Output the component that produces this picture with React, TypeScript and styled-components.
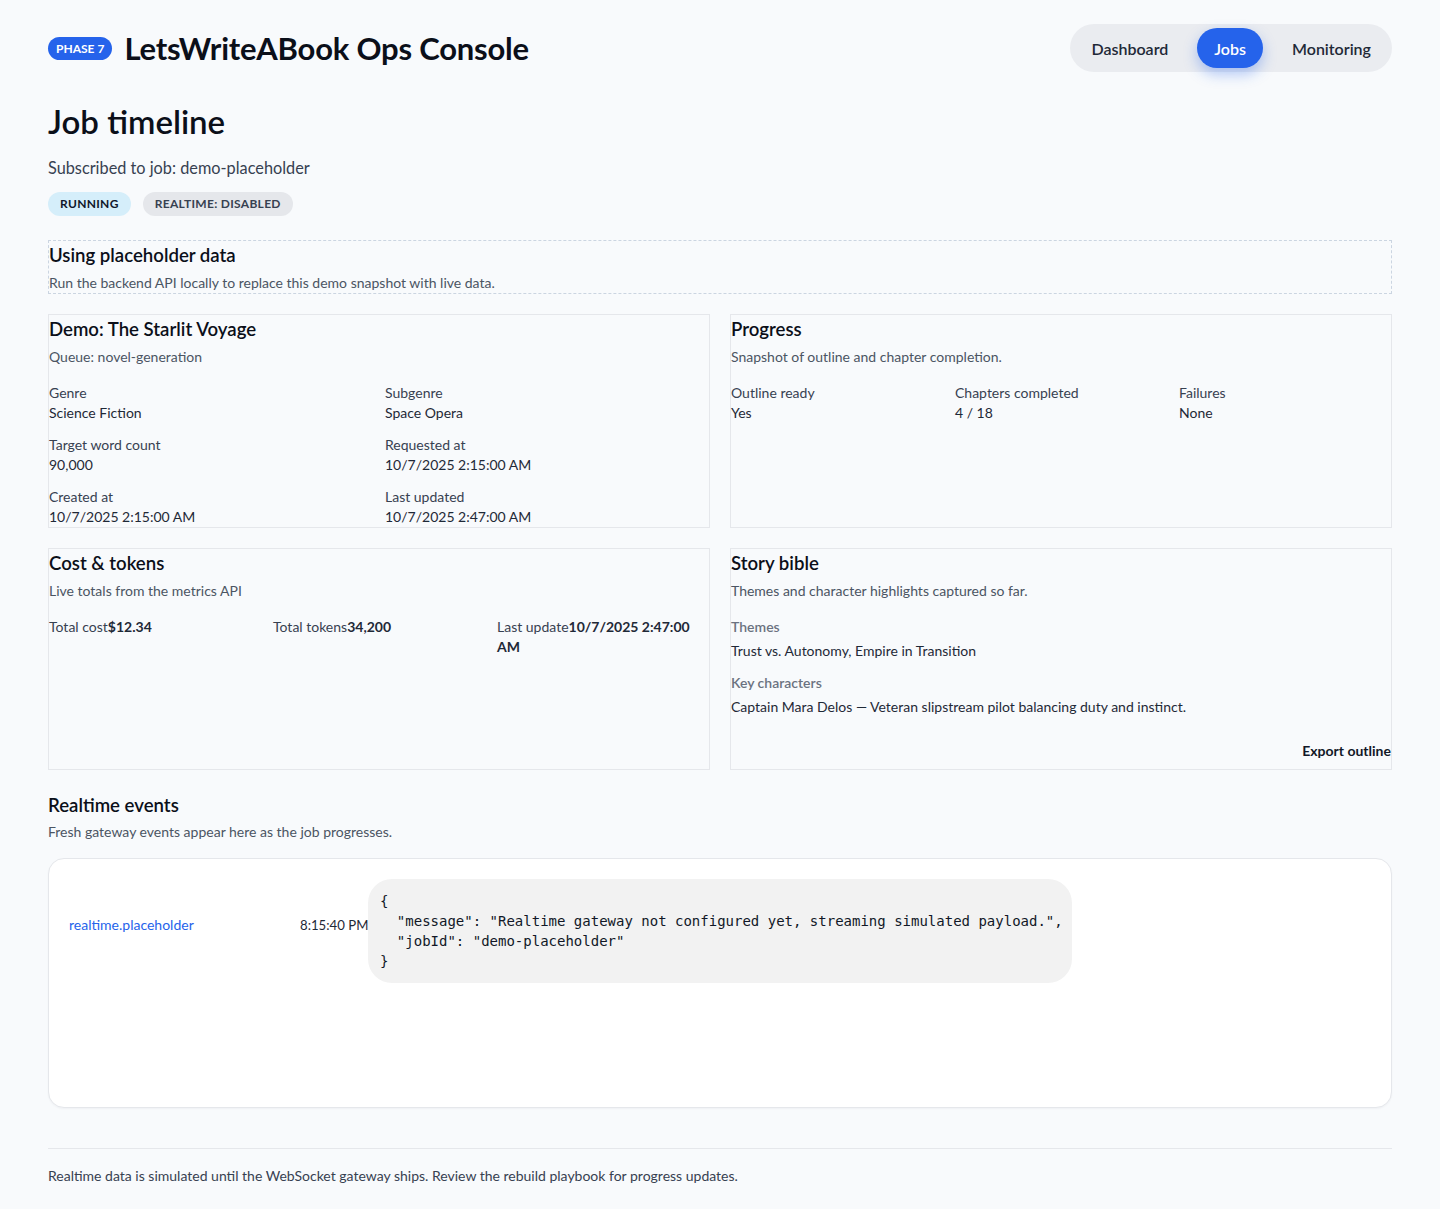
import React from "react";
import styled, { createGlobalStyle } from "styled-components";

const FONT = `Lato, "Noto Sans", "Liberation Sans", sans-serif`;
const MONO = `"DejaVu Sans Mono", "Liberation Mono", monospace`;

const Global = createGlobalStyle`
  * { box-sizing: border-box; }
  html, body { margin: 0; padding: 0; background: #f8fafc; }
  body { font-family: ${FONT}; color: #111827; }
`;

const Page = styled.div`
  padding: 24px 48px 24px;
  display: flex;
  flex-direction: column;
`;

const Header = styled.header`
  display: flex;
  align-items: center;
  justify-content: space-between;
  height: 48px;
`;

const Brand = styled.div`
  display: flex;
  align-items: center;
  gap: 12px;
`;

const PhaseBadge = styled.span`
  background: #2563eb;
  color: #fff;
  font-size: 12px;
  font-weight: 700;
  padding: 0 8px;
  height: 23px;
  line-height: 23px;
  border-radius: 999px;
`;

const BrandTitle = styled.h1`
  margin: 0;
  font-size: 31px;
  font-weight: 700;
  letter-spacing: -0.2px;
  color: #0b0f19;
`;

const Nav = styled.nav`
  display: flex;
  gap: 12px;
  padding: 4px;
  background: #eaecf0;
  border-radius: 999px;
`;

const NavItem = styled.a<{ $active?: boolean }>`
  height: 40px;
  display: flex;
  align-items: center;
  padding: 0 17px;
  border-radius: 999px;
  font-size: 16px;
  font-weight: 600;
  color: ${(p) => (p.$active ? "#ffffff" : "#1f2937")};
  background: ${(p) => (p.$active ? "#2563eb" : "transparent")};
  box-shadow: ${(p) => (p.$active ? "0 6px 14px rgba(37, 99, 235, 0.35)" : "none")};
  text-decoration: none;
`;

const PageTitle = styled.h2`
  margin: 29px 0 0;
  font-size: 33px;
  line-height: 40px;
  font-weight: 600;
  color: #0b0f19;
`;

const Subscribed = styled.p`
  margin: 15px 0 0;
  font-size: 16.3px;
  line-height: 24px;
  color: #374151;
`;

const BadgeRow = styled.div`
  display: flex;
  gap: 12px;
  margin-top: 12px;
`;

const Pill = styled.span<{ $tone: "info" | "muted" }>`
  height: 24px;
  line-height: 24px;
  padding: 0 12px;
  border-radius: 999px;
  font-size: 12px;
  font-weight: 700;
  letter-spacing: 0.3px;
  background: ${(p) => (p.$tone === "info" ? "#d5eefa" : "#e5e7eb")};
  color: ${(p) => (p.$tone === "info" ? "#0f172a" : "#374151")};
`;

const Notice = styled.section`
  margin-top: 24px;
  border: 1px dashed #cbd5e1;
  display: flex;
  flex-direction: column;
  gap: 4px;
`;

const CardTitle = styled.h3`
  margin: 0;
  font-size: 18.6px;
  line-height: 28px;
  font-weight: 600;
  color: #0b0f19;
`;

const CardSub = styled.p`
  margin: 0;
  font-size: 14px;
  line-height: 20px;
  color: #4b5563;
`;

const Grid = styled.div`
  display: grid;
  grid-template-columns: 1fr 1fr;
  gap: 20px;
  margin-top: 20px;
`;

const Card = styled.section`
  border: 1px solid #e5e7eb;
  display: flex;
  flex-direction: column;
`;

const CardHead = styled.div`
  display: flex;
  flex-direction: column;
  gap: 4px;
  margin-bottom: 16px;
`;

const Fields = styled.dl<{ $cols: number }>`
  margin: 0;
  display: grid;
  grid-template-columns: repeat(${(p) => p.$cols}, 1fr);
  column-gap: 12px;
  row-gap: 12px;
`;

const Field = styled.div`
  display: flex;
  flex-direction: column;
`;

const Label = styled.dt`
  font-size: 14px;
  line-height: 20px;
  color: #374151;
`;

const Value = styled.dd`
  margin: 0;
  font-size: 14px;
  line-height: 20px;
  color: #1f2937;
`;

const Metric = styled.div`
  font-size: 14px;
  line-height: 20px;
  color: #374151;
  strong {
    font-weight: 700;
    color: #1f2937;
  }
`;

const BibleBlock = styled.div`
  display: flex;
  flex-direction: column;
  gap: 4px;
  & + & {
    margin-top: 12px;
  }
`;

const BibleLabel = styled.h4`
  margin: 0;
  font-size: 14px;
  line-height: 20px;
  font-weight: 600;
  color: #6b7280;
`;

const BibleText = styled.p`
  margin: 0;
  font-size: 14px;
  line-height: 20px;
  color: #1f2937;
`;

const Actions = styled.div`
  display: flex;
  justify-content: flex-end;
  margin-top: 16px;
`;

const GhostButton = styled.button`
  border: 0;
  background: transparent;
  padding: 8px 0;
  font-family: inherit;
  font-size: 14px;
  line-height: 20px;
  font-weight: 700;
  color: #111827;
  cursor: pointer;
`;

const SectionHead = styled.div`
  margin-top: 21px;
  display: flex;
  flex-direction: column;
  gap: 3px;
`;

const Panel = styled.div`
  margin-top: 16px;
  background: #ffffff;
  border: 1px solid #e5e7eb;
  border-radius: 16px;
  box-shadow: 0 1px 2px rgba(15, 23, 42, 0.04);
  padding: 20px;
  min-height: 250px;
`;

const EventRow = styled.div`
  display: grid;
  grid-template-columns: 231px 68px 704px;
  justify-content: start;
  align-items: center;
`;

const EventName = styled.span`
  font-size: 14px;
  line-height: 20px;
  color: #2563eb;
  padding-bottom: 12px;
`;

const EventTime = styled.span`
  font-size: 13.2px;
  line-height: 20px;
  color: #1f2937;
  padding-bottom: 12px;
  white-space: nowrap;
`;

const Payload = styled.pre`
  margin: 0;
  padding: 12px;
  background: #f2f2f2;
  border-radius: 24px;
  font-family: ${MONO};
  font-size: 14px;
  line-height: 20px;
  color: #111827;
`;

const Footer = styled.footer`
  margin-top: 40px;
  border-top: 1px solid #e5e7eb;
  padding-top: 17px;
  font-size: 14px;
  line-height: 20px;
  color: #374151;
`;

const payload = `{
  "message": "Realtime gateway not configured yet, streaming simulated payload.",
  "jobId": "demo-placeholder"
}`;

export default function App() {
  return (
    <>
      <Global />
      <Page>
        <Header>
          <Brand>
            <PhaseBadge>PHASE 7</PhaseBadge>
            <BrandTitle>LetsWriteABook Ops Console</BrandTitle>
          </Brand>
          <Nav>
            <NavItem href="#">Dashboard</NavItem>
            <NavItem href="#" $active>Jobs</NavItem>
            <NavItem href="#">Monitoring</NavItem>
          </Nav>
        </Header>

        <PageTitle>Job timeline</PageTitle>
        <Subscribed>Subscribed to job: demo-placeholder</Subscribed>
        <BadgeRow>
          <Pill $tone="info">RUNNING</Pill>
          <Pill $tone="muted">REALTIME: DISABLED</Pill>
        </BadgeRow>

        <Notice>
          <CardTitle>Using placeholder data</CardTitle>
          <CardSub>Run the backend API locally to replace this demo snapshot with live data.</CardSub>
        </Notice>

        <Grid>
          <Card>
            <CardHead>
              <CardTitle>Demo: The Starlit Voyage</CardTitle>
              <CardSub>Queue: novel-generation</CardSub>
            </CardHead>
            <Fields $cols={2}>
              <Field><Label>Genre</Label><Value>Science Fiction</Value></Field>
              <Field><Label>Subgenre</Label><Value>Space Opera</Value></Field>
              <Field><Label>Target word count</Label><Value>90,000</Value></Field>
              <Field><Label>Requested at</Label><Value>10/7/2025 2:15:00 AM</Value></Field>
              <Field><Label>Created at</Label><Value>10/7/2025 2:15:00 AM</Value></Field>
              <Field><Label>Last updated</Label><Value>10/7/2025 2:47:00 AM</Value></Field>
            </Fields>
          </Card>

          <Card>
            <CardHead>
              <CardTitle>Progress</CardTitle>
              <CardSub>Snapshot of outline and chapter completion.</CardSub>
            </CardHead>
            <Fields $cols={3}>
              <Field><Label>Outline ready</Label><Value>Yes</Value></Field>
              <Field><Label>Chapters completed</Label><Value>4 / 18</Value></Field>
              <Field><Label>Failures</Label><Value>None</Value></Field>
            </Fields>
          </Card>

          <Card>
            <CardHead>
              <CardTitle>Cost &amp; tokens</CardTitle>
              <CardSub>Live totals from the metrics API</CardSub>
            </CardHead>
            <Fields $cols={3}>
              <Metric>Total cost<strong>$12.34</strong></Metric>
              <Metric>Total tokens<strong>34,200</strong></Metric>
              <Metric>Last update<strong>10/7/2025 2:47:00 AM</strong></Metric>
            </Fields>
          </Card>

          <Card>
            <CardHead>
              <CardTitle>Story bible</CardTitle>
              <CardSub>Themes and character highlights captured so far.</CardSub>
            </CardHead>
            <BibleBlock>
              <BibleLabel>Themes</BibleLabel>
              <BibleText>Trust vs. Autonomy, Empire in Transition</BibleText>
            </BibleBlock>
            <BibleBlock>
              <BibleLabel>Key characters</BibleLabel>
              <BibleText>Captain Mara Delos — Veteran slipstream pilot balancing duty and instinct.</BibleText>
            </BibleBlock>
            <Actions>
              <GhostButton type="button">Export outline</GhostButton>
            </Actions>
          </Card>
        </Grid>

        <SectionHead>
          <CardTitle>Realtime events</CardTitle>
          <CardSub>Fresh gateway events appear here as the job progresses.</CardSub>
        </SectionHead>

        <Panel>
          <EventRow>
            <EventName>realtime.placeholder</EventName>
            <EventTime>8:15:40 PM</EventTime>
            <Payload>{payload}</Payload>
          </EventRow>
        </Panel>

        <Footer>
          Realtime data is simulated until the WebSocket gateway ships. Review the rebuild playbook for progress updates.
        </Footer>
      </Page>
    </>
  );
}
